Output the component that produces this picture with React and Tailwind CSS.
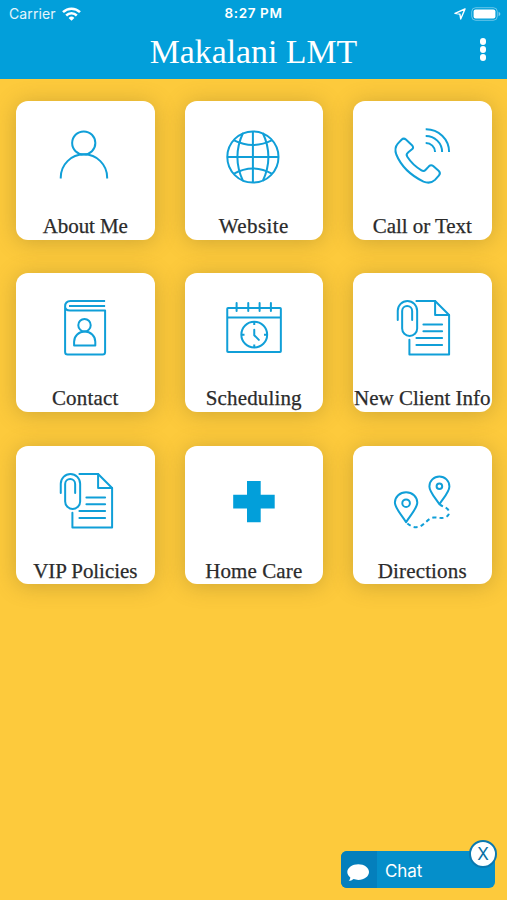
import React from "react";
import { clsx } from "clsx";

function Icon({ children }) {
  return (
    <svg
      viewBox="0 0 64 64"
      className="h-16 w-16 text-[#109fd8]"
      fill="none"
      stroke="currentColor"
      strokeWidth="2"
      strokeLinejoin="round"
    >
      {children}
    </svg>
  );
}

function PersonIcon() {
  return (
    <Icon>
      <circle cx="30.75" cy="18" r="11.6" />
      <path d="M7.75 53.5v-1a23.2 23.2 0 0 1 46.4 0v1" />
    </Icon>
  );
}

function GlobeIcon() {
  return (
    <Icon>
      <circle cx="30.9" cy="32" r="25.6" />
      <path d="M30.9 6.4v51.2M5.3 32h51.2" />
      <path d="M21 8Q9.8 32 21 56M40.8 8Q52 32 40.8 56" />
      <path d="M11.6 15.2Q30.9 25 50.2 15.2M11.6 48.8Q30.9 38 50.2 48.8" />
    </Icon>
  );
}

function PhoneIcon() {
  return (
    <Icon>
      <path d="M11.5 14.8Q13.7 12.6 15.9 14.6L22 20.3Q24.2 22.5 22 24.3L18.3 27.2Q15.6 29.3 17.3 31.8Q22.5 40 31.5 45.4Q33.8 46.8 35.7 44.8L38.9 41.3Q41 39.3 43.2 41L48.6 45.8Q51 48 49 50.3L45 54.9Q40.5 59.3 33.5 56.6C21 50.5 11 41 6.3 29.5Q4 23 7.8 18.6Z" />
      <path d="M35.7 4.3A23 22.7 0 0 1 59.1 27M35.7 11A16.3 16 0 0 1 52.1 27M35.7 18A9.3 9 0 0 1 45.1 27" />
    </Icon>
  );
}

function ContactIcon() {
  return (
    <Icon>
      <path d="M52.1 4H17.6Q12.1 4 12.1 9.5V54.9Q12.1 57.4 14.6 57.4H49.6Q52.1 57.4 52.1 54.9V13.5H17Q12.1 13.5 12.1 9.5" />
      <path d="M16 9H52.1" />
      <circle cx="31.5" cy="28.2" r="6.2" />
      <path d="M21.1 48.4V44.7a10.6 10.2 0 0 1 21.2 0V48.4Z" />
    </Icon>
  );
}

function CalendarIcon() {
  return (
    <Icon>
      <rect x="5.25" y="11" width="53.6" height="44" rx="0.8" />
      <path d="M5.25 20.4H58.9" />
      <path d="M14.6 6v8M26.25 6v8M37.6 6v8M48.9 6v8" strokeLinecap="round" />
      <circle cx="32.25" cy="37.7" r="12.9" />
      <path d="M32.25 32.7v5.5l4.6 4.7" strokeLinecap="round" />
      <path d="M32.25 25v3M32.25 47.4v3M19.5 37.7h3M42 37.7h3" />
    </Icon>
  );
}

function DocumentIcon() {
  return (
    <Icon>
      <g strokeLinecap="round">
        <path d="M7.75 23V13.7a9.7 9.7 0 0 1 19.4 0V31.5a7.5 7.5 0 0 1-15 0V14a5 5 0 0 1 10 0V23" />
        <path d="M26.4 4H45.1L59.1 18V57.4H19.4V42.7" />
        <path d="M45.1 4V18H59.1" />
        <path d="M33.4 27.4H52.1M33.4 34.2H52.1M26.4 41H52.1M26.4 48H52.1" />
      </g>
    </Icon>
  );
}

function PlusIcon() {
  return (
    <Icon>
      <path d="M25 11h13.7v13.8h14v13.8h-14v13.6H25V38.600H11.200V24.800H25Z" fill="#029fda" stroke="none" />
    </Icon>
  );
}

function RouteIcon() {
  return (
    <Icon>
      <path d="M16.1 52.2C11 44 4.9 38 4.9 32.6A11.2 10.4 0 0 1 27.3 32.6C27.3 38 21.2 44 16.1 52.2Z" />
      <circle cx="16.1" cy="33.2" r="3.8" />
      <path d="M49.4 34.2C44.6 27 39.4 21.5 39.4 16.4A10 9.9 0 0 1 59.4 16.4C59.4 21.5 54.2 27 49.4 34.2Z" />
      <circle cx="49.4" cy="16.2" r="2.8" />
      <path
        d="M17.4 53.4C21 56.5 25 58.2 29.5 56.6C35 54.5 38 48 43.8 47.5C48 47.2 51 48.8 55 47.5C59 46 60.5 42 57.5 39C55 36.6 52.5 36.6 50 34.6"
        strokeDasharray="4 3.2"
      />
    </Icon>
  );
}

const tiles = [
  { label: "About Me", icon: PersonIcon, tracking: "tracking-[-0.1px]" },
  { label: "Website", icon: GlobeIcon, tracking: "tracking-[0.4px]" },
  { label: "Call or Text", icon: PhoneIcon, tracking: "tracking-[-0.05px]" },
  { label: "Contact", icon: ContactIcon, tracking: "tracking-[0.2px]" },
  { label: "Scheduling", icon: CalendarIcon, tracking: "tracking-[0.15px]" },
  { label: "New Client Info", icon: DocumentIcon, tracking: "tracking-normal" },
  { label: "VIP Policies", icon: DocumentIcon, tracking: "tracking-[-0.05px]" },
  { label: "Home Care", icon: PlusIcon, tracking: "tracking-[0.1px]" },
  { label: "Directions", icon: RouteIcon, tracking: "tracking-[0.15px]" },
];

function Tile({ label, icon: TileIcon, tracking }) {
  return (
    <button className="flex h-[138.5px] flex-col items-center rounded-[12px] bg-white pt-6 shadow-[0_2px_22px_rgba(110,90,30,0.32)]">
      <TileIcon />
      <span
        className={clsx(
          "mt-[25px] font-['Liberation_Serif',serif] text-[21px] leading-6 whitespace-nowrap text-[#2b2b2b] [-webkit-text-stroke:0.25px_#2b2b2b]",
          tracking
        )}
      >
        {label}
      </span>
    </button>
  );
}

function StatusBar() {
  return (
    <div className="grid h-[27px] grid-cols-3 items-center px-[9px] text-[14px] leading-none">
      <div className="flex items-center gap-1.5">
        <span className="tracking-[0.1px] text-white/90">Carrier</span>
        <svg viewBox="0 0 19 14" className="h-3.5 w-[19px]" fill="none" stroke="white" strokeWidth="2.5">
          <path d="M1 5.2a12.2 12.2 0 0 1 17 0" />
          <path d="M4.2 8.5a7.6 7.6 0 0 1 10.6 0" />
          <path d="M9.5 13.8 6.600 10.900a4.200 4.200 0 0 1 5.800 0Z" fill="white" stroke="none" />
        </svg>
      </div>
      <span className="pt-px text-center text-[13.5px] font-semibold tracking-[0.6px] whitespace-nowrap">8:27 PM</span>
      <div className="flex items-center justify-end gap-[5px]">
        <svg viewBox="0 0 12 12" className="h-3 w-3" fill="none" stroke="white" strokeWidth="1.4" strokeLinejoin="round">
          <path d="M11 1 1 5.4 5.9 6.1 6.700 11Z" />
        </svg>
        <svg viewBox="0 0 30 14" className="-mr-[3px] h-3.5 w-[30px]">
          <rect x="0.7" y="0.7" width="25.6" height="12.6" rx="4" fill="none" stroke="white" strokeOpacity="0.4" />
          <rect x="2.6" y="2.5" width="21.8" height="9" rx="2" fill="white" />
          <path d="M27.600 4.800q1.800.800 1.800 2.200t-1.800 2.200Z" fill="white" fillOpacity="0.5" />
        </svg>
      </div>
    </div>
  );
}

function ChatWidget() {
  return (
    <div className="relative flex h-[37px] w-[154px] rounded-[6px] bg-[#058fca] text-white">
      <div className="flex w-9 items-center justify-center rounded-l-[6px] bg-[#047fbc] pt-1.5 pr-0.5">
        <svg viewBox="0 0 24 20" className="h-5 w-6" fill="white">
          <path d="M12.300 1.300c6 0 10.700 3.400 10.700 7.800s-4.700 7.800-10.700 7.800c-1.700 0-3.300-.3-4.700-.8-1.500 1.300-3.200 2-5 2 1-1 1.600-2.300 1.700-3.700C2.500 13 1.300 11.200 1.300 9.100c0-4.400 5-7.800 11-7.800Z" />
        </svg>
      </div>
      <span className="pl-2 text-[17px] leading-[40px] tracking-[-0.1px]">Chat</span>
      <button className="absolute -top-[11.5px] -right-0.5 flex h-7 w-7 items-center justify-center rounded-full border-2 border-[#0a79b0] bg-white pt-0.5 text-[17px] leading-none text-[#0a6fa3]">
        X
      </button>
    </div>
  );
}

export default function App() {
  return (
    <div className="flex h-[900px] w-[507px] flex-col overflow-hidden bg-[#fdca3c] font-['Inter',sans-serif]">
      <header className="h-[79px] shrink-0 bg-[#029fda] text-white">
        <StatusBar />
        <div className="grid h-[52px] grid-cols-[48px_1fr_48px] items-center">
          <h1 className="col-start-2 -mt-[3px] text-center font-['Liberation_Serif',serif] text-[33.8px] leading-[49px] whitespace-nowrap">
            Makalani LMT
          </h1>
          <button className="flex flex-col items-center gap-[1.5px] pb-[7px]" aria-label="Menu">
            <span className="h-[6.5px] w-[6.5px] rounded-full bg-white" />
            <span className="h-[6.5px] w-[6.5px] rounded-full bg-white" />
            <span className="h-[6.5px] w-[6.5px] rounded-full bg-white" />
          </button>
        </div>
      </header>

      <main className="grid grid-cols-[138.5px_138.5px_138.5px] gap-x-[30px] gap-y-[33.8px] pt-[22px] pl-4">
        {tiles.map((tile) => (
          <Tile key={tile.label} {...tile} />
        ))}
      </main>

      <div className="mt-auto mr-3 mb-3 self-end">
        <ChatWidget />
      </div>
    </div>
  );
}
